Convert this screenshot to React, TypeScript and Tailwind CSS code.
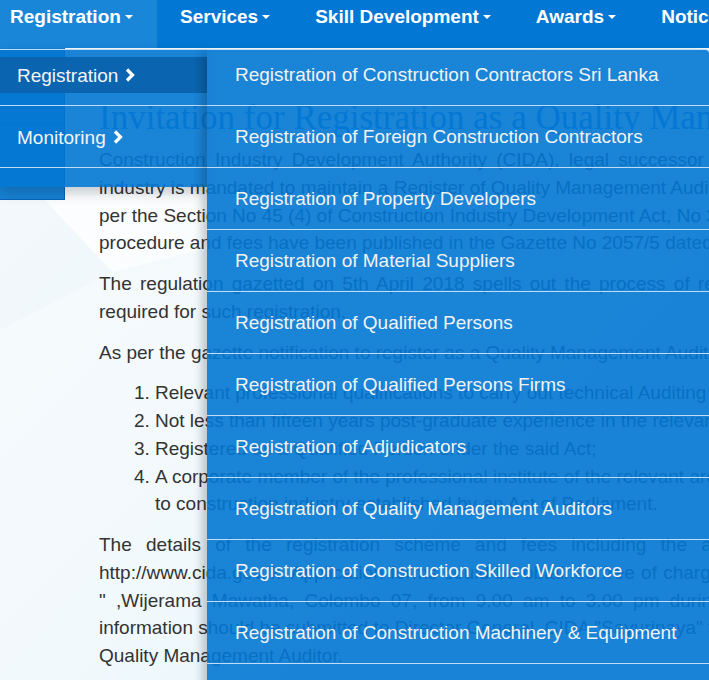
import React from "react";

const topNav = [
  { label: "Registration", active: true },
  { label: "Services" },
  { label: "Skill Development" },
  { label: "Awards" },
  { label: "Notices" },
];

const subMenu = [
  "Registration of Construction Contractors Sri Lanka",
  "Registration of Foreign Construction Contractors",
  "Registration of Property Developers",
  "Registration of Material Suppliers",
  "Registration of Qualified Persons",
  "Registration of Qualified Persons Firms",
  "Registration of Adjudicators",
  "Registration of Quality Management Auditors",
  "Registration of Construction Skilled Workforce",
  "Registration of Construction Machinery & Equipment",
];

const Caret = () => (
  <span className="ml-[4px] inline-block h-0 w-0 border-x-[4px] border-t-[4px] border-x-transparent border-t-white" />
);

const Chevron = () => (
  <svg width="10" height="14" viewBox="0 0 10 14" className="ml-[7px]">
    <polyline points="2,1.5 7.5,7 2,12.5" fill="none" stroke="white" strokeWidth="3.2" />
  </svg>
);

const Line = ({ children, ws = "" }: { children: React.ReactNode; ws?: string }) => (
  <span className={`block whitespace-nowrap ${ws}`}>{children}</span>
);

export default function App() {
  return (
    <div className="relative h-[680px] w-[709px] overflow-hidden bg-gradient-to-br from-[#f8fbfd] via-[#f2f9fc] to-[#e3f5fc] font-['Liberation_Sans',Arial,sans-serif]">
      {/* background decoration */}
      <svg className="absolute inset-0" width="709" height="680">
        <polygon points="40,195 420,195 112,272" fill="#ffffff" opacity="0.55" />
        <polygon points="0,190 40,195 112,272 0,330" fill="#eef5f9" opacity="0.5" />
      </svg>

      {/* top navigation */}
      <nav className="relative flex h-12 gap-[13px] bg-[#0277d3] text-[19px] font-bold text-white">
        {topNav.map((item) => (
          <div
            key={item.label}
            className={`flex h-12 shrink-0 items-start pl-[10px] pr-[22px] pt-[3px] leading-[27px] ${
              item.active ? "w-[157px] bg-[#1a86d8]" : ""
            }`}
          >
            <span className="flex items-center">
              {item.label}
              {item.label !== "Notices" && <Caret />}
            </span>
          </div>
        ))}
      </nav>

      {/* page content */}
      <main className="relative w-[1200px] pl-[99px] pt-[50px] text-[19px] leading-[27.75px] text-[#333]">
        <h1 className="font-['Liberation_Serif','Times_New_Roman',serif] text-[35px] leading-[40px] font-normal whitespace-nowrap text-[#0b7bd8]">
          Invitation for Registration as a Quality Management Auditor
        </h1>
        <p className="mt-[8px] mb-[13px]">
          <Line ws="[word-spacing:4px]">Construction Industry Development Authority (CIDA), legal successor of ICTAD for the construction</Line>
          <Line>industry is mandated to maintain a Register of Quality Management Auditors as</Line>
          <Line>per the Section No 45 (4) of Construction Industry Development Act, No 33 of 2014. The registration</Line>
          <Line>procedure and fees have been published in the Gazette No 2057/5 dated 05.02.2018.</Line>
        </p>
        <p className="mb-[13px]">
          <Line ws="[word-spacing:3px]">The regulation gazetted on 5th April 2018 spells out the process of registration and the qualifications</Line>
          <Line>required for such registration.</Line>
        </p>
        <p className="mb-[13px]">
          <Line>As per the gazette notification to register as a Quality Management Auditor, the applicant should possess:</Line>
        </p>
        <ol className="mb-[13px] list-decimal pl-[56px]">
          <li className="whitespace-nowrap">Relevant professional qualifications to carry out technical Auditing in construction</li>
          <li className="whitespace-nowrap">Not less than fifteen years post-graduate experience in the relevant field;</li>
          <li className="whitespace-nowrap">Registered as a Qualified Person under the said Act;</li>
          <li className="whitespace-nowrap">
            A corporate member of the professional institute of the relevant area of specialization related
            <br />
            to construction industry established by an Act of Parliament.
          </li>
        </ol>
        <p>
          <Line ws="[word-spacing:9px]">The details of the registration scheme and fees including the application are available at</Line>
          <Line ws="[word-spacing:1px]">http://www.cida.gov.lk. Application forms could be obtained free of charge from CIDA "Sayuripaya</Line>
          <Line ws="[word-spacing:5px]">" ,Wijerama Mawatha, Colombo 07, from 9.00 am to 3.00 pm during working days. Duly completed</Line>
          <Line>information should be submitted to Director General, CIDA "Sayurinaya" for registration as a</Line>
          <Line>Quality Management Auditor.</Line>
        </p>
      </main>

      {/* box behind the first dropdown */}
      <div className="absolute left-0 top-[48px] h-[152px] w-[65px] border-b border-r border-[#0a62b8] bg-[#1682d5]">
        <div className="mt-[75px] border-b border-[#0a62b8]" />
      </div>

      {/* first-level dropdown */}
      <div className="absolute left-0 top-[49px] h-[138px] w-[207px] border-t border-[#c0dbf2] bg-[#0277d3]/90 text-[19px] leading-[27px] text-[#f4f4f4] shadow-[0_6px_12px_rgba(0,0,0,0.18)]">
        <div className="border-b border-[#c0dbf2] pb-[12px] pt-[7px]">
          <a className="flex h-[36px] items-center bg-[#0a64af] pl-[17px]">
            Registration
            <Chevron />
          </a>
        </div>
        <div className="border-b border-[#c0dbf2] pb-[12px] pt-[13px]">
          <a className="flex h-[36px] items-center pl-[17px]">
            Monitoring
            <Chevron />
          </a>
        </div>
      </div>

      {/* second-level dropdown */}
      <div className="absolute bottom-[-20px] left-[207px] top-[49px] w-[502px] rounded-tr-[4px] border-t border-[#c0dbf2] bg-[#0277d3]/90 text-[19px] leading-[27px] text-[#f2f2f2] shadow-[-5px_4px_10px_rgba(0,0,0,0.22)]">
        {subMenu.map((label, i) => (
          <div
            key={label}
            className={`whitespace-nowrap border-b border-[#c0dbf2] pl-[28px] ${
              i === 0 ? "pb-[17px] pt-[11px]" : "py-[17px]"
            }`}
          >
            {label}
          </div>
        ))}
      </div>
    </div>
  );
}
